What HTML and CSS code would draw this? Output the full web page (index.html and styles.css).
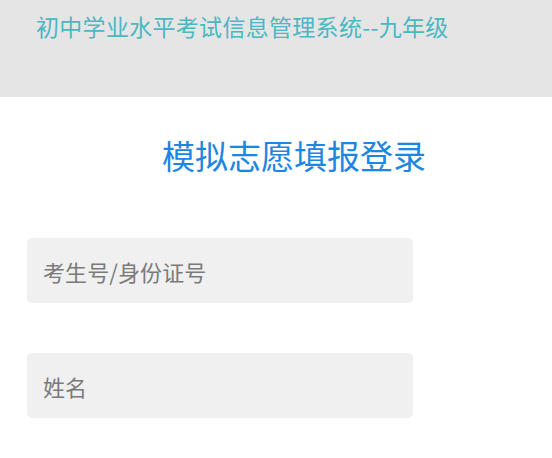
FILE: index.html
```html
<!DOCTYPE html>
<html lang="zh-CN">
<head>
<meta charset="utf-8">
<title>模拟志愿填报登录</title>
<link rel="stylesheet" href="styles.css">
</head>
<body>
<header class="topbar">
  <h1 class="system-name">初中学业水平考试信息管理系统--九年级</h1>
</header>
<main class="login">
  <h2 class="login-title">模拟志愿填报登录</h2>
  <form class="login-form">
    <input class="field" type="text" placeholder="考生号/身份证号">
    <input class="field" type="text" placeholder="姓名">
  </form>
</main>
</body>
</html>
```
FILE: styles.css
```css
html, body {
  margin: 0;
  padding: 0;
  background: #ffffff;
  font-family: "Noto Sans CJK SC", "Noto Sans", sans-serif;
}

.topbar {
  height: 97px;
  background: #e5e5e5;
  box-sizing: border-box;
  padding: 9px 0 0 36px;
}

.system-name {
  margin: 0;
  font-size: 23px;
  line-height: 34px;
  font-weight: 400;
  letter-spacing: 0.3px;
  color: #4bb7c1;
}

.login {
  display: flex;
  flex-direction: column;
}

.login-title {
  margin: 36px 0 0 0;
  padding-left: 36px;
  text-align: center;
  font-size: 33px;
  line-height: 44px;
  font-weight: 400;
  color: #1d86e2;
}

.login-form {
  display: flex;
  flex-direction: column;
  gap: 50px;
  margin-top: 61px;
  padding-left: 27px;
}

.field {
  width: 386px;
  height: 65px;
  box-sizing: border-box;
  border: none;
  border-radius: 5px;
  background: #f0f0f0;
  padding: 0 16px;
  font-family: "Noto Sans CJK SC", "Noto Sans", sans-serif;
  font-size: 22px;
  letter-spacing: 0.1px;
  color: #333;
  outline: none;
}

.field::placeholder {
  color: #7a7a7a;
}
```
